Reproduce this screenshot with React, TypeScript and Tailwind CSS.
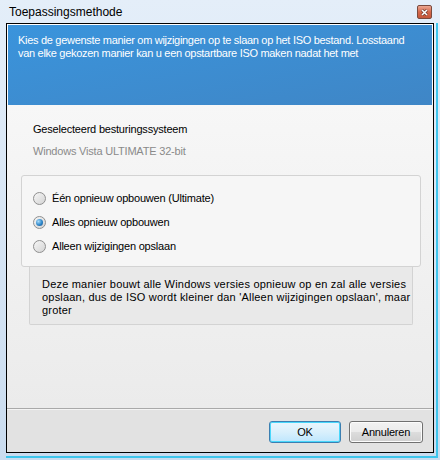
export default function App() {
  const font = { fontFamily: '"Liberation Sans", Arial, sans-serif' };

  return (
    <div
      className="w-[440px] h-[460px] flex flex-col bg-gradient-to-b from-[#e4eef9] to-[#cadcef] text-[11px] leading-[13px] tracking-[-0.2px] text-black"
      style={font}
    >
      {/* title bar */}
      <div className="h-[23px] flex items-center justify-between pl-[9px] pr-[8px]">
        <span className="text-[12px] leading-[15px] tracking-normal mt-[2px]">Toepassingsmethode</span>
        <button className="w-[15px] h-[14px] rounded-[2px] border border-[#7a4a3e] bg-gradient-to-b from-[#eba792] via-[#d5674a] to-[#c4573a] flex items-center justify-center mt-[1px]">
          <svg width="7" height="7" viewBox="0 0 7 7">
            <path d="M1 1 L6 6 M6 1 L1 6" stroke="#5a2a20" strokeWidth="2.6" />
            <path d="M1 1 L6 6 M6 1 L1 6" stroke="white" strokeWidth="1.6" />
          </svg>
        </button>
      </div>

      {/* client wrapper with frame glow line */}
      <div className="flex-1 ml-[6px] mr-[2px] mb-[2px] pr-[2px] pb-[3px] border-r-2 border-b-2 border-[#3ec5ec] flex">
        <div className="flex-1 border border-black bg-white flex flex-col">
          {/* blue header */}
          <div className="mt-[1px] mx-[1px] h-[80px] bg-gradient-to-br from-[#3a94dc] to-[#3f86c6] text-white pl-[10px] pt-[9px] tracking-[-0.3px]">
            <p>
              Kies de gewenste manier om wijzigingen op te slaan op het ISO bestand. Losstaand
              <br />
              van elke gekozen manier kan u een opstartbare ISO maken nadat het met
            </p>
          </div>

          {/* body */}
          <div className="flex-1 bg-gradient-to-b from-[#f7f7f7] to-[#ebebeb] flex flex-col">
            <p className="mt-[18px] pl-[26px]">Geselecteerd besturingssysteem</p>
            <p className="mt-[9px] pl-[26px] text-[#8a8a8a]">Windows Vista ULTIMATE 32-bit</p>

            <div className="mt-[17px] ml-[14px] w-[400px]">
              <div className="h-[92px] border border-[#d3d3d3] rounded-[3px] bg-[#f6f6f6] pt-[10px] pl-[11px] flex flex-col">
                <Radio label="Één opnieuw opbouwen (Ultimate)" />
                <Radio label="Alles opnieuw opbouwen" checked />
                <Radio label="Alleen wijzigingen opslaan" />
              </div>
              <div className="mx-[8px] h-[58px] border border-t-0 border-[#d3d3d3] rounded-b-[2px] bg-[#e9e9e9] pl-[12px] pt-[11px] tracking-[0.2px]">
                <p>
                  Deze manier bouwt alle Windows versies opnieuw op en zal alle versies
                  <br />
                  opslaan, dus de ISO wordt kleiner dan 'Alleen wijzigingen opslaan', maar
                  <br />
                  groter
                </p>
              </div>
            </div>
          </div>

          {/* separator */}
          <div className="h-px bg-[#a9a9a9]" />
          <div className="h-px bg-[#f4f4f4]" />

          {/* buttons */}
          <div className="h-[42px] bg-[#e2e2e2] flex justify-end gap-[8px] pt-[11px] pr-[10px]">
            <button className="w-[72px] h-[22px] rounded-[3px] border border-[#3c7fb1] bg-gradient-to-b from-[#eaf6fd] via-[#d9f0fc] to-[#bee6fd] shadow-[inset_0_0_0_1px_#48d7fb]">
              OK
            </button>
            <button className="w-[74px] h-[22px] rounded-[3px] border border-[#707070] bg-[linear-gradient(to_bottom,#f2f2f2_0%,#ebebeb_50%,#dddddd_51%,#cfcfcf_100%)] shadow-[inset_0_0_0_1px_#fcfcfc]">
              Annuleren
            </button>
          </div>
        </div>
      </div>
    </div>
  );
}

function Radio({ label, checked }: { label: string; checked?: boolean }) {
  return (
    <div className="h-[24px] flex items-center">
      <span className="w-[13px] h-[13px] rounded-full border border-[#8f8f8f] bg-gradient-to-br from-[#f6f6f6] to-[#d4d4d4] flex items-center justify-center">
        {checked && (
          <span className="w-[7px] h-[7px] rounded-full bg-[radial-gradient(circle_at_35%_35%,#a8dcfb_0%,#2d86c9_55%,#1a4e86_100%)]" />
        )}
      </span>
      <span className="ml-[6px]">{label}</span>
    </div>
  );
}
